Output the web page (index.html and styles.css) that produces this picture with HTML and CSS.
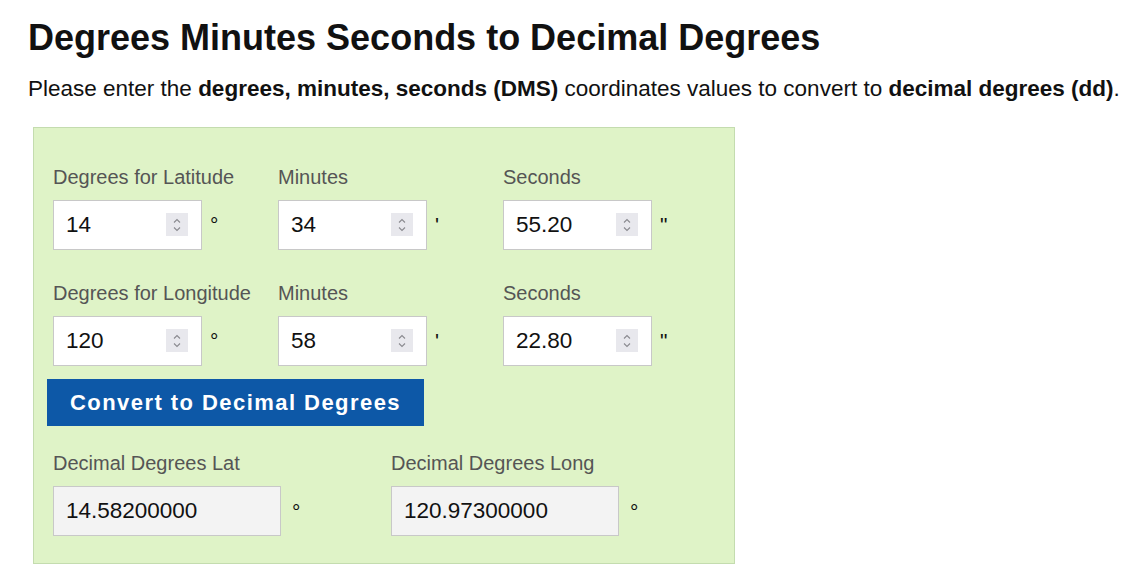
FILE: index.html
```html
<!DOCTYPE html>
<html>
<head>
<meta charset="utf-8">
<link rel="stylesheet" href="styles.css">
</head>
<body>
<h1 class="title">Degrees Minutes Seconds to Decimal Degrees</h1>
<p class="intro">Please enter the <b>degrees, minutes, seconds (DMS)</b> coordinates values to convert to <b>decimal degrees (dd)</b>.</p>
<div class="panel">
  <div class="dms-grid">
    <div class="cell">
      <label class="lbl">Degrees for Latitude</label>
      <div class="field-row">
        <div class="num"><input class="inp" type="text" value="14"><span class="spin"><svg width="10" height="16" viewBox="0 0 10 16"><path d="M2 5.5 L5 2.5 L8 5.5 M2 10.5 L5 13.5 L8 10.5" fill="none" stroke="#8a8a8f" stroke-width="1.1"/></svg></span></div>
        <span class="sym">°</span>
      </div>
    </div>
    <div class="cell">
      <label class="lbl">Minutes</label>
      <div class="field-row">
        <div class="num"><input class="inp" type="text" value="34"><span class="spin"><svg width="10" height="16" viewBox="0 0 10 16"><path d="M2 5.5 L5 2.5 L8 5.5 M2 10.5 L5 13.5 L8 10.5" fill="none" stroke="#8a8a8f" stroke-width="1.1"/></svg></span></div>
        <span class="sym">'</span>
      </div>
    </div>
    <div class="cell">
      <label class="lbl">Seconds</label>
      <div class="field-row">
        <div class="num"><input class="inp" type="text" value="55.20"><span class="spin"><svg width="10" height="16" viewBox="0 0 10 16"><path d="M2 5.5 L5 2.5 L8 5.5 M2 10.5 L5 13.5 L8 10.5" fill="none" stroke="#8a8a8f" stroke-width="1.1"/></svg></span></div>
        <span class="sym">"</span>
      </div>
    </div>
    <div class="cell">
      <label class="lbl">Degrees for Longitude</label>
      <div class="field-row">
        <div class="num"><input class="inp" type="text" value="120"><span class="spin"><svg width="10" height="16" viewBox="0 0 10 16"><path d="M2 5.5 L5 2.5 L8 5.5 M2 10.5 L5 13.5 L8 10.5" fill="none" stroke="#8a8a8f" stroke-width="1.1"/></svg></span></div>
        <span class="sym">°</span>
      </div>
    </div>
    <div class="cell">
      <label class="lbl">Minutes</label>
      <div class="field-row">
        <div class="num"><input class="inp" type="text" value="58"><span class="spin"><svg width="10" height="16" viewBox="0 0 10 16"><path d="M2 5.5 L5 2.5 L8 5.5 M2 10.5 L5 13.5 L8 10.5" fill="none" stroke="#8a8a8f" stroke-width="1.1"/></svg></span></div>
        <span class="sym">'</span>
      </div>
    </div>
    <div class="cell">
      <label class="lbl">Seconds</label>
      <div class="field-row">
        <div class="num"><input class="inp" type="text" value="22.80"><span class="spin"><svg width="10" height="16" viewBox="0 0 10 16"><path d="M2 5.5 L5 2.5 L8 5.5 M2 10.5 L5 13.5 L8 10.5" fill="none" stroke="#8a8a8f" stroke-width="1.1"/></svg></span></div>
        <span class="sym">"</span>
      </div>
    </div>
  </div>
  <button class="convert" type="button">Convert to Decimal Degrees</button>
  <div class="dd-grid">
    <div class="cell">
      <label class="lbl">Decimal Degrees Lat</label>
      <div class="field-row">
        <input class="inp out" type="text" value="14.58200000" readonly>
        <span class="sym dsym">°</span>
      </div>
    </div>
    <div class="cell">
      <label class="lbl">Decimal Degrees Long</label>
      <div class="field-row">
        <input class="inp out" type="text" value="120.97300000" readonly>
        <span class="sym dsym">°</span>
      </div>
    </div>
  </div>
</div>
</body>
</html>
```
FILE: styles.css
```css
html, body {
  margin: 0;
  padding: 0;
  background: #ffffff;
}
body {
  font-family: "Liberation Sans", Arial, sans-serif;
  color: #111;
  padding-left: 28px;
}
.title {
  font-size: 36px;
  font-weight: bold;
  line-height: 40px;
  margin: 18px 0 0;
  color: #111;
}
.intro {
  font-size: 22.5px;
  line-height: 26px;
  margin: 18px 0 0;
  color: #111;
}
.intro b {
  font-weight: bold;
}
.panel {
  margin: 25px 0 0 5px;
  width: 681px;
  background: #dff3c7;
  border: 1px solid #c4dcaf;
  padding: 38px 0 27px 19px;
}
.dms-grid {
  display: grid;
  grid-template-columns: 225px 225px 225px;
  row-gap: 32px;
}
.cell {
  display: flex;
  flex-direction: column;
}
.lbl {
  font-size: 20px;
  line-height: 22px;
  color: #555;
  margin-bottom: 12px;
}
.field-row {
  display: flex;
  align-items: flex-start;
}
.num {
  position: relative;
  width: 149px;
  height: 50px;
}
.inp {
  box-sizing: border-box;
  width: 149px;
  height: 50px;
  border: 1px solid #c8c8c8;
  background: #fff;
  font-family: "Liberation Sans", Arial, sans-serif;
  font-size: 22.5px;
  color: #111;
  padding: 0 0 0 12px;
  margin: 0;
  outline: none;
}
.spin {
  position: absolute;
  left: 113px;
  top: 13px;
  width: 22px;
  height: 23px;
  background: #e8e8ed;
  display: flex;
  align-items: center;
  justify-content: center;
}
.sym {
  font-size: 21px;
  line-height: 20px;
  margin: 15px 0 0 8px;
  color: #111;
}
.convert {
  display: block;
  margin: 13px 0 0 -6px;
  width: 377px;
  height: 47px;
  background: #0d58a7;
  color: #fff;
  border: none;
  font-family: "Liberation Sans", Arial, sans-serif;
  font-size: 22px;
  font-weight: bold;
  letter-spacing: 1.45px;
  padding: 0;
  text-align: center;
}
.dd-grid {
  display: grid;
  grid-template-columns: 338px 338px;
  margin-top: 26px;
}
.out {
  width: 228px;
  background: #f3f3f3;
}
.dsym {
  margin-left: 11px;
  margin-top: 16px;
}
```
